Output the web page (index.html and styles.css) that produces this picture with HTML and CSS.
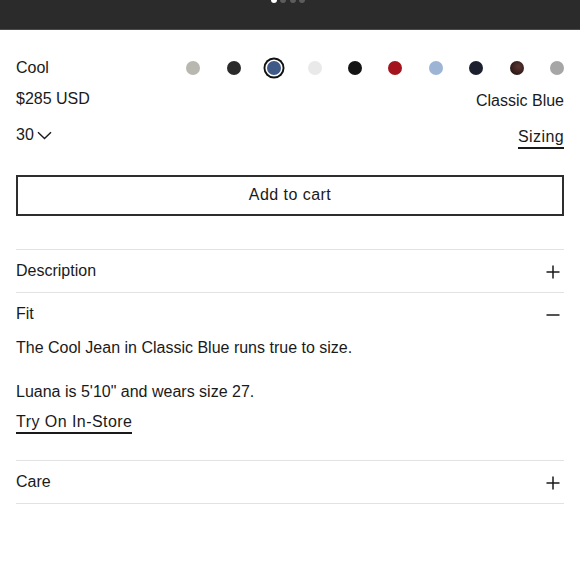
FILE: index.html
```html
<!DOCTYPE html>
<html lang="en">
<head>
<meta charset="utf-8">
<title>Cool Jean</title>
<link rel="stylesheet" href="styles.css">
</head>
<body>
<div class="topbar">
  <div class="dots">
    <span class="dot dot-active"></span>
    <span class="dot"></span>
    <span class="dot"></span>
    <span class="dot"></span>
  </div>
</div>
<main class="product">
  <div class="row row-name">
    <span class="name">Cool</span>
    <div class="swatches">
      <span class="swatch sw-greige"></span>
      <span class="swatch sw-charcoal"></span>
      <span class="swatch sw-blue selected"></span>
      <span class="swatch sw-white"></span>
      <span class="swatch sw-black"></span>
      <span class="swatch sw-red"></span>
      <span class="swatch sw-light"></span>
      <span class="swatch sw-navy"></span>
      <span class="swatch sw-brown"></span>
      <span class="swatch sw-grey"></span>
    </div>
  </div>
  <div class="row row-price">
    <span class="price">$285 USD</span>
    <span class="color-name">Classic Blue</span>
  </div>
  <div class="row row-size">
    <span class="size">30<svg class="chev" width="15" height="9" viewBox="0 0 15 9"><path d="M1 1.2 L7.5 7.5 L14 1.2" fill="none" stroke="#1a1a1a" stroke-width="1.4"/></svg></span>
    <span class="sizing">Sizing</span>
  </div>
  <button class="cart">Add to cart</button>

  <div class="accordion">
    <div class="acc-item">
      <div class="acc-head"><span>Description</span>
        <svg class="acc-icon" width="14" height="14" viewBox="0 0 14 14"><path d="M7 0.5 V13.5 M0.5 7 H13.5" stroke="#1a1a1a" stroke-width="1.5" fill="none"/></svg>
      </div>
    </div>
    <div class="acc-item">
      <div class="acc-head"><span>Fit</span>
        <svg class="acc-icon" width="14" height="14" viewBox="0 0 14 14"><path d="M0.5 7 H13.5" stroke="#1a1a1a" stroke-width="1.5" fill="none"/></svg>
      </div>
      <div class="acc-body">
        <p class="p1">The Cool Jean in Classic Blue runs true to size.</p>
        <p class="p2">Luana is 5'10" and wears size 27.</p>
        <a class="try" href="#">Try On In-Store</a>
      </div>
    </div>
    <div class="acc-item">
      <div class="acc-head"><span>Care</span>
        <svg class="acc-icon" width="14" height="14" viewBox="0 0 14 14"><path d="M7 0.5 V13.5 M0.5 7 H13.5" stroke="#1a1a1a" stroke-width="1.5" fill="none"/></svg>
      </div>
    </div>
  </div>
</main>
</body>
</html>
```
FILE: styles.css
```css
* { box-sizing: border-box; }
html, body { margin: 0; padding: 0; background: #fff; }
body {
  font-family: "Liberation Sans", Arial, sans-serif;
  font-size: 16px;
  line-height: 20px;
  color: #1a1a1a;
}
.topbar {
  height: 30px;
  background: #2b2b2b;
  border-bottom: 1px solid #4c4c4c;
  overflow: hidden;
}
.dots {
  display: flex;
  justify-content: center;
  gap: 3.6px;
  margin-top: -3px;
  padding-right: 4px;
}
.dot {
  width: 6px;
  height: 6px;
  border-radius: 50%;
  background: #5c5c5c;
}
.dot-active { background: #fff; }

.product { padding: 27px 16px 0; }
.row {
  display: flex;
  justify-content: space-between;
}
.row-name { height: 22px; align-items: center; }
.swatches { display: flex; gap: 26.4px; align-items: center; }
.swatch {
  width: 14px;
  height: 14px;
  border-radius: 50%;
  display: block;
}
.sw-greige { background: #b8b8b0; }
.sw-charcoal { background: #2a2a2a; }
.sw-blue { background: #3f5a86; }
.sw-white { background: #e9e9e9; }
.sw-black { background: #141414; }
.sw-red { background: #a3141f; }
.sw-light { background: #9db4d4; }
.sw-navy { background: #1c1f2e; }
.sw-brown { background: radial-gradient(circle at 60% 40%, #5a3530, #2a1716 75%); }
.sw-grey { background: #a6a6a6; }
.swatch.selected { box-shadow: 0 0 0 1.6px #fff, 0 0 0 3.5px #111; }

.row-price { margin-top: 9.7px; align-items: flex-start; }
.color-name { padding-top: 2.5px; }
.row-size { margin-top: 13.5px; align-items: flex-start; }
.size { display: flex; align-items: center; gap: 3px; }
.chev { display: block; margin-top: 1px; }
.sizing {
  margin-top: 2px;
  border-bottom: 2px solid #1a1a1a;
  letter-spacing: 0.4px;
}
.cart {
  display: block;
  width: 100%;
  height: 41px;
  margin-top: 26px;
  border: 2px solid #2e2e2e;
  background: #fff;
  font-family: inherit;
  font-size: 16px;
  letter-spacing: 0.45px;
  color: #1a1a1a;
  padding: 0;
  border-radius: 0;
}
.accordion { margin-top: 33px; }
.acc-item { border-top: 1px solid #e2e2e2; }
.acc-item:last-child { border-bottom: 1px solid #e2e2e2; }
.acc-head {
  display: flex;
  justify-content: space-between;
  align-items: center;
  padding: 10px 0;
  line-height: 22px;
}
.acc-icon { display: block; margin-right: 4px; margin-top: 2px; }
.acc-body { padding: 3px 0 26px; }
.acc-body p { margin: 0; }
.p2 { margin-top: 24px !important; }
.try {
  display: inline-block;
  margin-top: 10px;
  color: #1a1a1a;
  text-decoration: none;
  letter-spacing: 0.45px;
  border-bottom: 2px solid #1a1a1a;
  line-height: 20px;
}
```
